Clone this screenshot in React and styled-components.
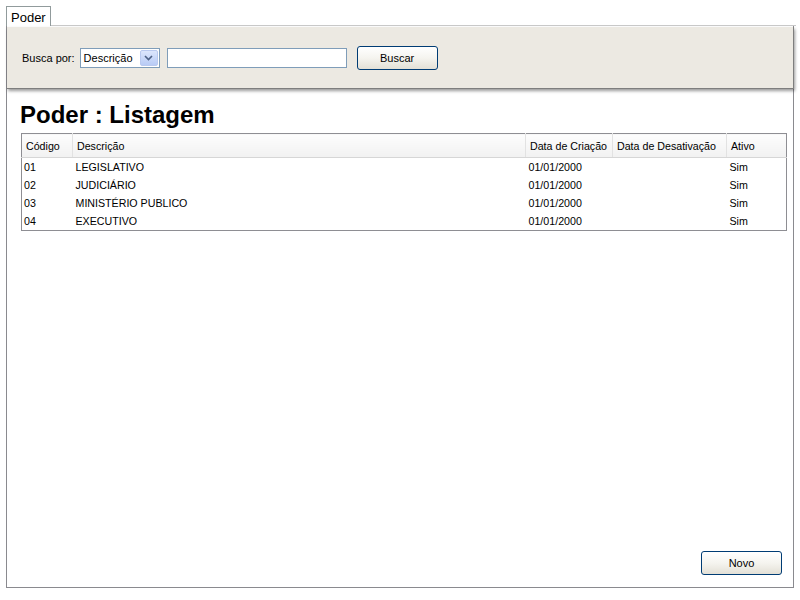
import React from "react";
import styled, { createGlobalStyle } from "styled-components";

const GlobalStyle = createGlobalStyle`
  html, body {
    margin: 0;
    padding: 0;
    background: #fff;
    font-family: "Liberation Sans", Arial, sans-serif;
  }
`;

const poderes = [
  { codigo: "01", descricao: "LEGISLATIVO", criacao: "01/01/2000", desativacao: "", ativo: "Sim" },
  { codigo: "02", descricao: "JUDICIÁRIO", criacao: "01/01/2000", desativacao: "", ativo: "Sim" },
  { codigo: "03", descricao: "MINISTÉRIO PUBLICO", criacao: "01/01/2000", desativacao: "", ativo: "Sim" },
  { codigo: "04", descricao: "EXECUTIVO", criacao: "01/01/2000", desativacao: "", ativo: "Sim" },
];

const columns = [
  { key: "codigo", label: "Código", width: 51 },
  { key: "descricao", label: "Descrição", width: 453 },
  { key: "criacao", label: "Data de Criação", width: 87 },
  { key: "desativacao", label: "Data de Desativação", width: 114 },
  { key: "ativo", label: "Ativo" },
];

export default function App() {
  const [campo] = React.useState("descricao");
  const [termo, setTermo] = React.useState("");

  return (
    <>
      <GlobalStyle />
      <Page>
        <TabStrip>
          <Tab>Poder</Tab>
          <TabLine />
        </TabStrip>
        <Frame>
          <SearchPanel>
            <Label>Busca por:</Label>
            <SelectBox>
              <SelectValue>{campo === "descricao" ? "Descrição" : "Código"}</SelectValue>
              <SelectArrow>
                <svg width="9" height="6" viewBox="0 0 9 6">
                  <path d="M1 1 L4.5 4.5 L8 1" fill="none" stroke="#4d6185" strokeWidth="1.6" />
                </svg>
              </SelectArrow>
            </SelectBox>
            <TextInput value={termo} onChange={(e) => setTermo(e.target.value)} />
            <XpButton $gap={10}>Buscar</XpButton>
          </SearchPanel>

          <Content>
            <Title>Poder : Listagem</Title>
            <Grid>
              <colgroup>
                {columns.map((col) => (
                  <col key={col.key} style={col.width ? { width: col.width } : undefined} />
                ))}
              </colgroup>
              <thead>
                <tr>
                  {columns.map((col) => (
                    <HeadCell key={col.key}>{col.label}</HeadCell>
                  ))}
                </tr>
              </thead>
              <tbody>
                {poderes.map((p) => (
                  <tr key={p.codigo}>
                    {columns.map((col) => (
                      <Cell key={col.key}>{p[col.key]}</Cell>
                    ))}
                  </tr>
                ))}
              </tbody>
            </Grid>
          </Content>

          <Footer>
            <XpButton>Novo</XpButton>
          </Footer>
        </Frame>
      </Page>
    </>
  );
}

const Page = styled.div`
  padding: 6px 0 0 6px;
  width: 794px;
  box-sizing: border-box;
`;

const TabStrip = styled.div`
  display: flex;
  align-items: flex-end;
  height: 20px;
`;

const Tab = styled.div`
  height: 20px;
  box-sizing: border-box;
  padding: 2px 4px 0 4px;
  border: 1px solid #919b9c;
  border-bottom: none;
  background: #fff;
  font-family: Tahoma, "Liberation Sans", Arial, sans-serif;
  font-size: 13px;
  line-height: 17px;
  color: #000;
`;

const TabLine = styled.div`
  flex: 1;
  height: 0;
  border-bottom: 1px solid #c9c9c9;
  margin-right: -2px;
`;

const Frame = styled.div`
  width: 788px;
  height: 562px;
  box-sizing: border-box;
  border: 1px solid #8a8a8f;
  border-top: none;
  display: flex;
  flex-direction: column;
`;

const SearchPanel = styled.div`
  height: 62px;
  box-sizing: border-box;
  margin: 1px -1px 0 0;
  padding: 0 0 0 15px;
  display: flex;
  align-items: center;
  background: #ece9e2;
  border-right: 1px solid #7e7e7e;
  border-bottom: 1px solid #7e7e7e;
  box-shadow: 1px 2px 3px rgba(0, 0, 0, 0.4);
  font-size: 11px;
`;

const Label = styled.span`
  font-size: 11px;
  color: #000;
  margin-right: 5px;
`;

const SelectBox = styled.div`
  width: 80px;
  height: 20px;
  box-sizing: border-box;
  border: 1px solid #7f9db9;
  background: #fff;
  display: flex;
  align-items: stretch;
`;

const SelectValue = styled.span`
  flex: 1;
  padding-left: 3px;
  font-size: 11px;
  line-height: 18px;
  color: #000;
`;

const SelectArrow = styled.span`
  width: 16px;
  margin: 1px;
  border: 1px solid #b9c9ef;
  border-radius: 2px;
  background: linear-gradient(#dce6fc, #b8cbf5);
  display: flex;
  align-items: center;
  justify-content: center;
`;

const TextInput = styled.input`
  width: 180px;
  height: 20px;
  box-sizing: border-box;
  margin: 0 0 0 7px;
  border: 1px solid #7f9db9;
  padding: 0 3px;
  font-size: 11px;
  font-family: "Liberation Sans", Arial, sans-serif;
  outline: none;
`;

const XpButton = styled.button`
  width: 81px;
  height: 24px;
  box-sizing: border-box;
  margin-left: ${(p) => p.$gap || 0}px;
  border: 1px solid #003c74;
  border-radius: 3px;
  background: linear-gradient(#ffffff 0%, #f5f4ef 50%, #e3e0d6 100%);
  font-family: "Liberation Sans", Arial, sans-serif;
  font-size: 11px;
  color: #000;
  padding: 0;
  cursor: pointer;
`;

const Content = styled.div`
  flex: 1;
  padding: 12px 5px 0 14px;
`;

const Title = styled.h1`
  margin: 0 0 4px -1px;
  font-family: "Liberation Sans", Arial, sans-serif;
  font-size: 24px;
  line-height: 28px;
  font-weight: bold;
  color: #000;
`;

const Grid = styled.table`
  width: 766px;
  border-collapse: collapse;
  table-layout: fixed;
  border: 1px solid #8e8e93;
  font-family: "Liberation Sans", Arial, sans-serif;
  font-size: 8pt;
`;

const HeadCell = styled.th`
  height: 23px;
  padding: 0 4px;
  text-align: left;
  font-weight: normal;
  color: #000;
  background: linear-gradient(#fdfdfd, #f1f1f1);
  border-bottom: 1px solid #d6d6d6;
  border-left: 1px solid #e2e2e2;
  white-space: nowrap;
  overflow: hidden;
  &:first-child {
    border-left: none;
  }
`;

const Cell = styled.td`
  height: 18px;
  padding: 0 3px;
  color: #000;
  white-space: nowrap;
  overflow: hidden;
  &:first-child {
    padding-left: 2px;
  }
`;

const Footer = styled.div`
  display: flex;
  justify-content: flex-end;
  padding: 0 11px 12px 0;
`;
